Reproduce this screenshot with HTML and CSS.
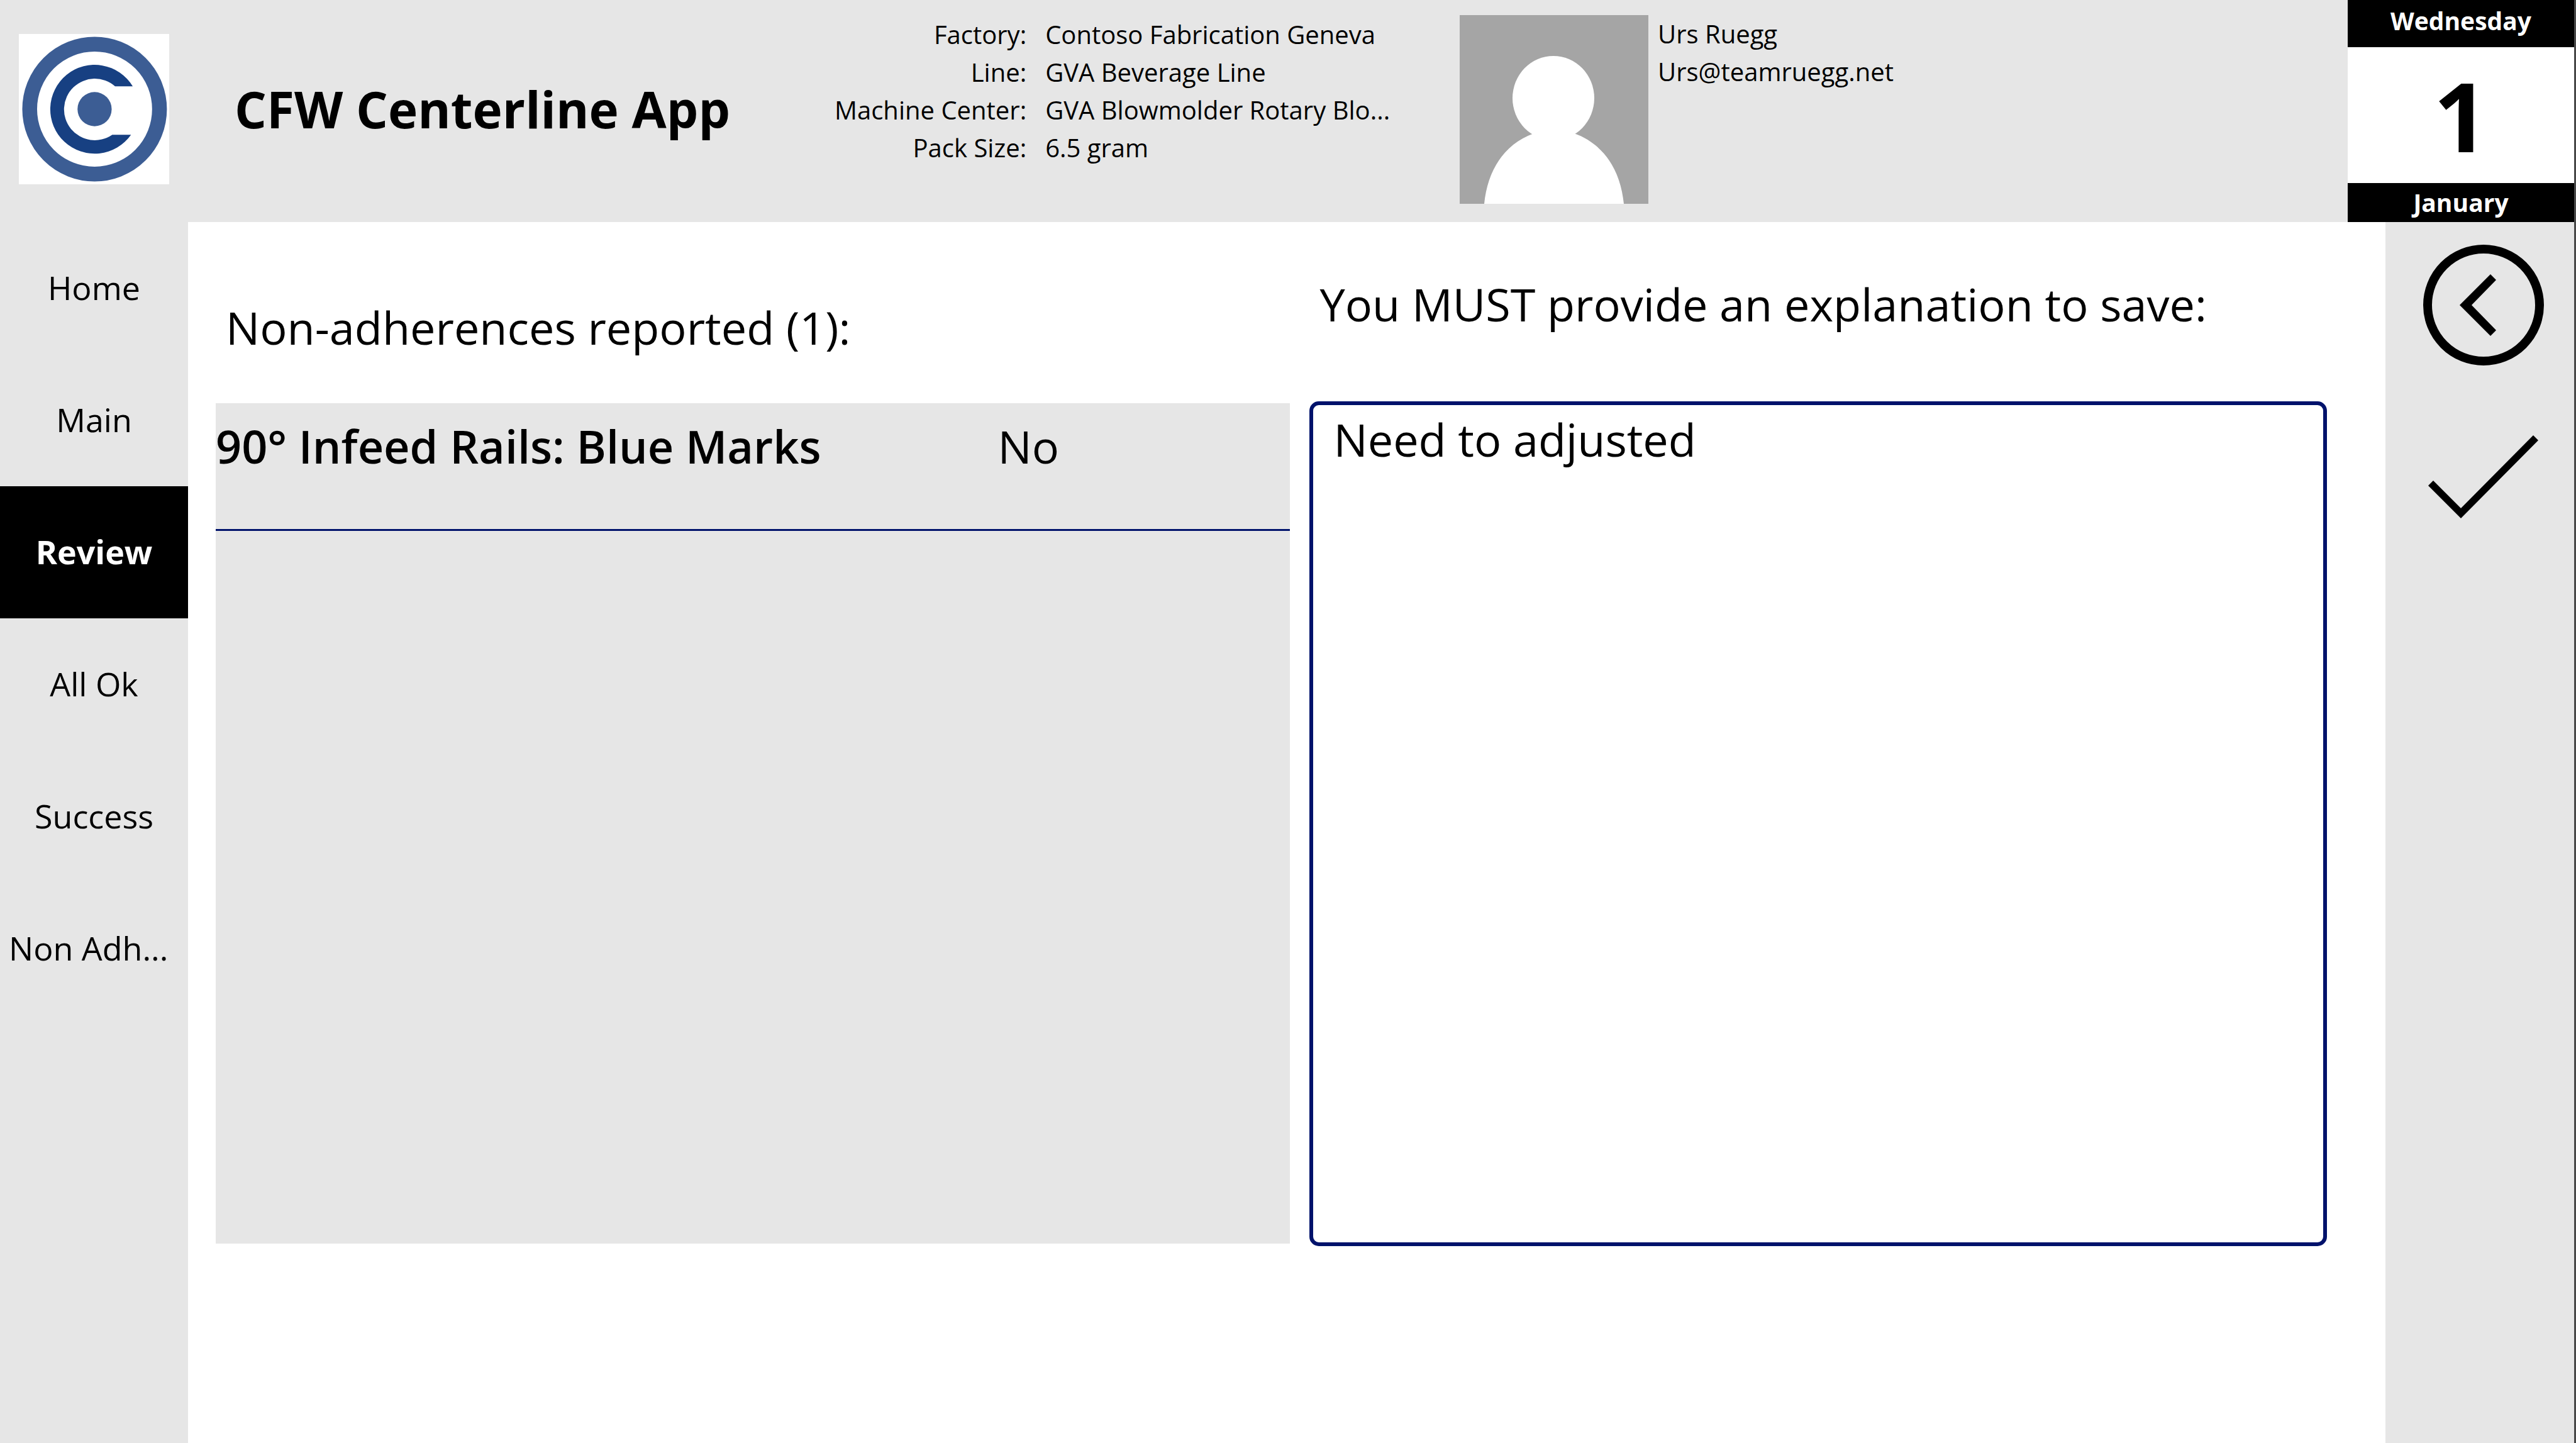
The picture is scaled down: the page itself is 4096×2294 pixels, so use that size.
FILE: index.html
```html
<!DOCTYPE html>
<html lang="en">
<head>
  <meta charset="utf-8">
  <meta name="viewport" content="width=device-width, initial-scale=1">
  <title>CFW Centerline App</title>
  <link rel="stylesheet" href="styles.css">
</head>
<body>
  <div class="app">
    <header class="header">
      <svg class="logo" viewBox="0 0 264 264" role="img" aria-label="Company logo">
        <rect width="264" height="264" fill="#fff"/>
        <circle cx="133" cy="132" r="114" fill="none" stroke="#3c5d94" stroke-width="26"/>
        <path d="M200 92A78 78 0 1 0 197 177H164A54 54 0 1 1 169 92Z" fill="#174082"/>
        <circle cx="133" cy="132" r="30" fill="#3c5d94"/>
      </svg>
      <h1 class="title">CFW Centerline App</h1>
      <dl class="info">
        <dt>Factory:</dt><dd>Contoso Fabrication Geneva</dd>
        <dt>Line:</dt><dd>GVA Beverage Line</dd>
        <dt>Machine Center:</dt><dd>GVA Blowmolder Rotary Blo...</dd>
        <dt>Pack Size:</dt><dd>6.5 gram</dd>
      </dl>
      <div class="user">
        <svg class="avatar" viewBox="0 0 300 300" role="img" aria-label="User picture">
          <rect width="300" height="300" fill="#a5a5a5"/>
          <ellipse cx="149" cy="132" rx="65" ry="67" fill="#fff"/>
          <path d="M39 300C44 250 68 206 118 188L150 170L182 188C232 206 256 250 261 300Z" fill="#fff"/>
        </svg>
        <div class="user-text">
          <div>Urs Ruegg</div>
          <div>Urs@teamruegg.net</div>
        </div>
      </div>
      <div class="date">
        <div class="date-weekday">Wednesday</div>
        <div class="date-day">1</div>
        <div class="date-month">January</div>
      </div>
    </header>

    <nav class="nav">
      <a class="nav-item" href="#home">Home</a>
      <a class="nav-item" href="#main">Main</a>
      <a class="nav-item nav-item-active" href="#review" aria-current="page">Review</a>
      <a class="nav-item" href="#all-ok">All Ok</a>
      <a class="nav-item" href="#success">Success</a>
      <a class="nav-item nav-item-cut" href="#non-adherence">Non Adh...</a>
    </nav>

    <main class="content">
      <section class="reported">
        <h2 class="heading">Non-adherences reported (1):</h2>
        <div class="list">
          <table class="list-table">
            <tbody>
              <tr><th scope="row">90° Infeed Rails: Blue Marks</th><td>No</td></tr>
            </tbody>
          </table>
        </div>
      </section>
      <section class="explanation">
        <label class="heading" for="explanation">You MUST provide an explanation to save:</label>
        <textarea class="explanation-box" id="explanation" spellcheck="false">Need to adjusted</textarea>
      </section>
    </main>

    <aside class="actions">
      <button class="action" type="button" aria-label="Back">
        <svg class="icon" viewBox="0 0 192 192">
          <circle cx="96" cy="96" r="89" fill="none" stroke="#000" stroke-width="14"/>
          <path d="M58 96L107 47L116 56L77 96L116 136L107 145Z"/>
        </svg>
      </button>
      <button class="action" type="button" aria-label="Save">
        <svg class="icon" viewBox="0 0 192 192">
          <path d="M16 103L8 111L60 163L183 39L175 31L60 147Z"/>
        </svg>
      </button>
    </aside>
  </div>
</body>
</html>
```
FILE: styles.css
```css
* {
  box-sizing: border-box;
}

body {
  margin: 0;
  background: #fff;
  color: #000;
  font-family: "Open Sans", sans-serif;
  font-size: 40px;
  line-height: 60px;
}

.app {
  display: grid;
  grid-template-columns: 299px 1fr 300px;
  grid-template-rows: auto 1fr;
  min-height: 100vh;
  border-right: 3px solid #484848;
}

/* Header */

.header {
  grid-column: 1 / -1;
  display: grid;
  grid-template-columns: 299px 976fr 1046fr 1412fr 360px;
  background: #e6e6e6;
}

.logo {
  width: 239px;
  height: 239px;
  margin: 54px 30px 60px;
}

.title {
  align-self: center;
  margin: 0;
  padding: 0 0 8px 74px;
  font-size: 80px;
  font-weight: 700;
  line-height: 108px;
  white-space: nowrap;
}

.info {
  display: grid;
  grid-template-columns: max-content max-content;
  column-gap: 30px;
  align-content: start;
  margin: 0;
  padding: 25px 0 0 52px;
  white-space: nowrap;
}

.info dt {
  text-align: right;
}

.info dd {
  margin: 0;
}

.user {
  display: flex;
  align-items: flex-start;
  gap: 15px;
  padding-top: 24px;
}

.avatar {
  width: 300px;
  height: 300px;
}

.date {
  display: flex;
  flex-direction: column;
  background: #000;
  color: #fff;
  font-weight: 700;
  text-align: center;
}

.date-weekday {
  padding-bottom: 9px;
  font-size: 39px;
  line-height: 66px;
}

.date-day {
  flex: 1;
  background: #fff;
  color: #000;
  font-size: 153px;
  line-height: 216px;
}

.date-month {
  font-size: 39px;
  line-height: 62px;
}

/* Page navigation */

.nav {
  background: #e6e6e6;
}

.nav-item {
  display: block;
  padding: 0 14px 2px;
  color: #000;
  font-size: 52px;
  line-height: 208px;
  text-align: center;
  text-decoration: none;
  white-space: nowrap;
}

.nav-item-active {
  background: #000;
  color: #fff;
  font-weight: 700;
}

.nav-item-cut {
  text-align: left;
}

/* Review form */

.content {
  display: grid;
  grid-template-columns: 1709fr 1618fr;
  column-gap: 31px;
  padding: 81px 93px 313px 44px;
  font-size: 72px;
  line-height: 98px;
}

.reported,
.explanation {
  display: flex;
  flex-direction: column;
}

.reported {
  padding: 37px 0 4px;
}

.heading {
  margin: 0;
  padding: 0 16px;
  font-size: 72px;
  font-weight: 400;
}

.list {
  flex: 1;
  margin-top: 72px;
  background: #e6e6e6;
}

.list-table {
  width: 100%;
  table-layout: fixed;
  border-collapse: separate;
  border-spacing: 0;
}

.list-table th,
.list-table td {
  padding: 19px 0 83px;
  border-bottom: 3px solid #00126b;
  text-align: left;
}

.list-table th {
  font-weight: 600;
}

.list-table td {
  width: 465px;
}

.explanation-box {
  flex: 1;
  width: 100%;
  margin-top: 106px;
  padding: 5px 32px;
  border: 6px solid #00126b;
  border-radius: 15px;
  outline: none;
  background: #fff;
  color: #000;
  font: inherit;
  resize: none;
}

/* Side actions */

.actions {
  display: flex;
  flex-direction: column;
  align-items: center;
  gap: 80px;
  padding: 36px 0 0 12px;
  background: #e6e6e6;
}

.action {
  padding: 0;
  border: 0;
  background: none;
  cursor: pointer;
}

.icon {
  display: block;
  width: 192px;
  height: 192px;
}
```
